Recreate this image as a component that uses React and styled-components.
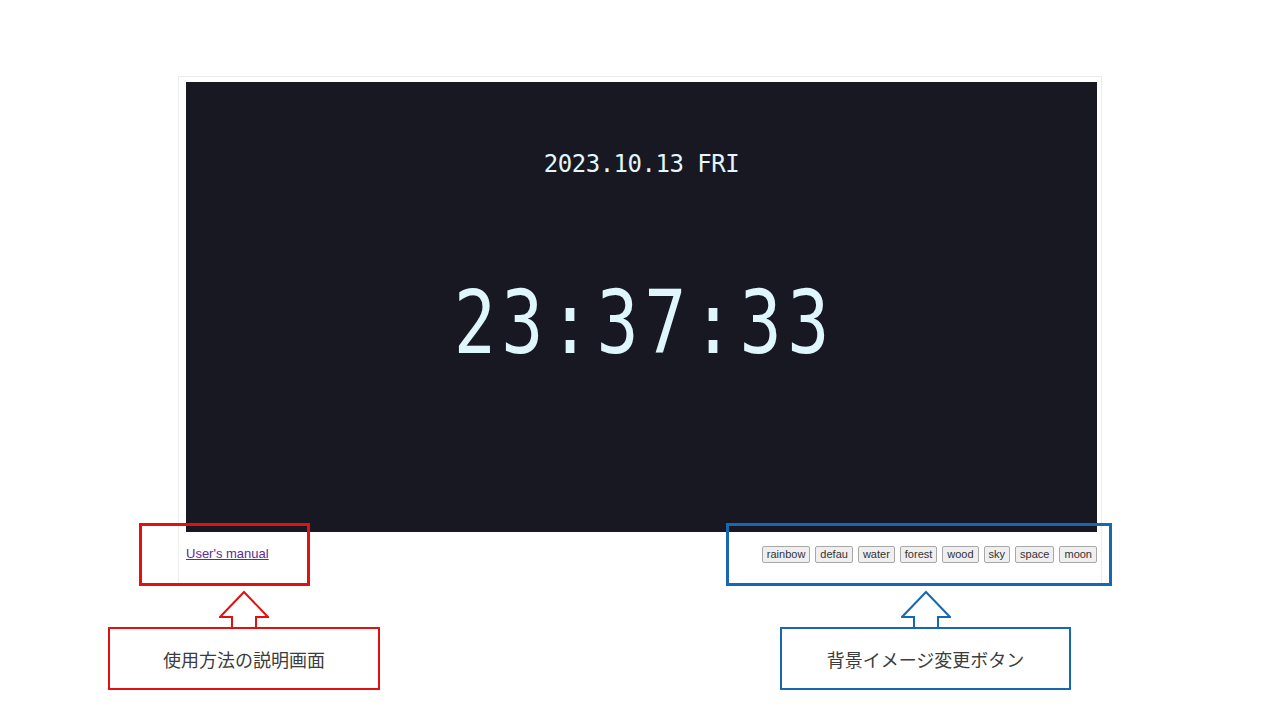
import React from "react";
import styled, { createGlobalStyle } from "styled-components";

const GlobalStyle = createGlobalStyle`
  * { box-sizing: border-box; }
  html, body { margin: 0; padding: 0; background: #ffffff; }
  body { font-family: "Liberation Sans", Arial, sans-serif; }
`;

const Slide = styled.div`
  position: relative;
  width: 1280px;
  height: 720px;
  overflow: hidden;
  background: #ffffff;
  padding-top: 76px;
  display: flex;
  flex-direction: column;
`;

const Frame = styled.div`
  margin-left: 178px;
  width: 924px;
  height: 508px;
  border: 1px solid #ededed;
  border-bottom: none;
  padding: 5px 4px 0 7px;
`;

const ClockPanel = styled.div`
  height: 450px;
  background: #171821;
  display: flex;
  flex-direction: column;
  align-items: center;
  padding-top: 67px;
  font-family: "DejaVu Sans Mono", monospace;
  color: #e2f6fb;
`;

const DateText = styled.div`
  font-size: 24px;
  line-height: 30px;
  letter-spacing: -0.5px;
`;

const TimeText = styled.div`
  margin-top: 104px;
  font-size: 70px;
  line-height: 80px;
  letter-spacing: 5.5px;
  padding-left: 5.5px;
  transform: scaleY(1.24);
  color: #dff6fc;
`;

const Footer = styled.div`
  display: flex;
  justify-content: space-between;
  align-items: flex-start;
  padding-top: 14px;
`;

const ManualLink = styled.a`
  font-family: "Liberation Sans", Arial, sans-serif;
  font-size: 13px;
  line-height: 15px;
  color: #5e2c97;
  text-decoration: underline;
  cursor: pointer;
`;

const ButtonRow = styled.div`
  display: flex;
  gap: 5px;
`;

const ThemeButton = styled.button`
  font-family: "Liberation Sans", Arial, sans-serif;
  font-size: 11px;
  line-height: 13px;
  height: 17px;
  padding: 1px 4px;
  color: #333;
  background: #efefef;
  border: 1px solid #a8a8a8;
  border-radius: 2px;
`;

/* coloured frames drawn over the screenshot */
const Highlight = styled.div`
  position: absolute;
  left: ${(p) => p.x}px;
  top: 523px;
  width: ${(p) => p.w}px;
  height: 63px;
  border: 3px solid ${(p) => p.color};
  pointer-events: none;
`;

const CalloutRow = styled.div`
  display: flex;
  justify-content: space-between;
  margin-top: 6px;
  padding: 0 209px 0 108px;
`;

const Callout = styled.div`
  display: flex;
  flex-direction: column;
  align-items: center;
  width: ${(p) => p.w}px;
`;

const ArrowSvg = styled.svg`
  display: block;
  margin-bottom: -3px;
`;

const NoteBox = styled.div`
  position: relative;
  width: 100%;
  height: 63px;
  border: 2px solid ${(p) => p.color};
  background: #ffffff;
  display: flex;
  align-items: center;
  justify-content: center;
  font-family: "Noto Sans CJK JP", sans-serif;
  font-size: 18px;
  color: #3c3c3c;
`;

function UpArrow({ color }) {
  return (
    <ArrowSvg width="50" height="40" viewBox="0 0 50 40">
      <polygon
        points="25,2 49,27 37,27 37,39 13,39 13,27 1,27"
        fill="#ffffff"
        stroke={color}
        strokeWidth="2"
      />
    </ArrowSvg>
  );
}

const themes = ["rainbow", "defau", "water", "forest", "wood", "sky", "space", "moon"];

const RED = "#e31010";
const BLUE = "#1768b0";

export default function App() {
  return (
    <>
      <GlobalStyle />
      <Slide>
        <Frame>
          <ClockPanel>
            <DateText>2023.10.13 FRI</DateText>
            <TimeText>23:37:33</TimeText>
          </ClockPanel>
          <Footer>
            <ManualLink>User's manual</ManualLink>
            <ButtonRow>
              {themes.map((t) => (
                <ThemeButton key={t}>{t}</ThemeButton>
              ))}
            </ButtonRow>
          </Footer>
        </Frame>

        <CalloutRow>
          <Callout w={272}>
            <UpArrow color={RED} />
            <NoteBox color={RED}>使用方法の説明画面</NoteBox>
          </Callout>
          <Callout w={291}>
            <UpArrow color={BLUE} />
            <NoteBox color={BLUE}>背景イメージ変更ボタン</NoteBox>
          </Callout>
        </CalloutRow>

        <Highlight x={139} w={171} color={RED} />
        <Highlight x={726} w={386} color={BLUE} />
      </Slide>
    </>
  );
}
